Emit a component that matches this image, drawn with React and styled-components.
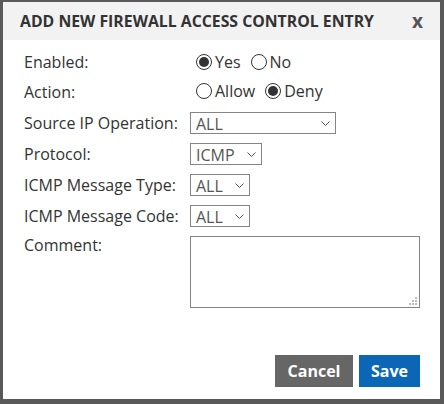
import React, { useState } from "react";
import styled, { createGlobalStyle } from "styled-components";

const GlobalStyle = createGlobalStyle`
  html, body {
    margin: 0;
    padding: 0;
    background: #595959;
    font-family: "Open Sans", "Noto Sans", sans-serif;
  }
`;

const Backdrop = styled.div`
  width: 444px;
  height: 404px;
  padding: 2px 4px 5px 3px;
  box-sizing: border-box;
`;

const Dialog = styled.div`
  background: #fff;
  height: 100%;
  display: flex;
  flex-direction: column;
`;

const Header = styled.div`
  height: 38px;
  background: #f2f2f2;
  display: flex;
  align-items: center;
  justify-content: space-between;
  padding: 0 17px 0 17px;
`;

const Title = styled.h2`
  margin: 0;
  font-size: 15.8px;
  font-weight: 700;
  color: #333;
`;

const Close = styled.button`
  border: 0;
  background: none;
  padding: 0;
  font-family: inherit;
  font-size: 19px;
  font-weight: 700;
  line-height: 1;
  color: #555;
  cursor: pointer;
`;

const Body = styled.div`
  flex: 1;
  display: grid;
  grid-template-columns: 166px 1fr;
  grid-auto-rows: min-content;
  row-gap: 9px;
  align-items: center;
  padding: 12px 21px 0 21px;
`;

const Label = styled.label`
  font-size: 16px;
  line-height: 20px;
  color: #333;
  align-self: ${(p) => (p.$top ? "start" : "center")};
  margin-top: ${(p) => (p.$top ? "-1px" : "0")};
`;

const RadioGroup = styled.div`
  display: flex;
  align-items: center;
  height: 20px;
  gap: 10px;
  padding-left: 6px;
  margin-bottom: ${(p) => (p.$last ? 2 : 0)}px;
`;

const RadioLabel = styled.label`
  display: flex;
  align-items: center;
  gap: 3px;
  font-size: 16px;
  color: #333;
  cursor: pointer;
`;

const RadioInput = styled.input`
  appearance: none;
  margin: 0;
  width: 16px;
  height: 16px;
  border: 1px solid #333;
  border-radius: 50%;
  background: #fff;
  box-sizing: border-box;
  display: grid;
  place-items: center;
  &:checked::after {
    content: "";
    width: 10px;
    height: 10px;
    border-radius: 50%;
    background: #333;
  }
`;

const SelectWrap = styled.div`
  position: relative;
  width: ${(p) => p.$w}px;
  height: 22px;
`;

const Select = styled.select`
  appearance: none;
  width: 100%;
  height: 100%;
  margin: 0;
  border: 1px solid #858585;
  border-radius: 0;
  background: #fff;
  padding: 0 0 0 5px;
  font-family: inherit;
  font-size: 16px;
  color: #555;
  outline: none;
`;

const Chevron = styled.svg`
  position: absolute;
  right: 6px;
  top: 9px;
  pointer-events: none;
`;

const TextWrap = styled.div`
  position: relative;
  width: 230px;
  height: 72px;
`;

const TextArea = styled.textarea`
  width: 100%;
  height: 100%;
  box-sizing: border-box;
  border: 1px solid #858585;
  resize: none;
  margin: 0;
  font-family: inherit;
  font-size: 14px;
  outline: none;
`;

const Grip = styled.svg`
  position: absolute;
  right: 3px;
  bottom: 3px;
  pointer-events: none;
`;

const Footer = styled.div`
  display: flex;
  justify-content: flex-end;
  gap: 6px;
  padding: 0 20px 12px 0;
`;

const Button = styled.button`
  height: 32px;
  width: ${(p) => (p.$primary ? 61 : 78)}px;
  border: 0;
  border-radius: 0;
  padding: 0;
  background: ${(p) => (p.$primary ? "#0b67b6" : "#666")};
  color: #fff;
  font-family: inherit;
  font-size: 16px;
  font-weight: 700;
  cursor: pointer;
`;

function Dropdown({ width, value, options }) {
  return (
    <SelectWrap $w={width}>
      <Select defaultValue={value}>
        {options.map((o) => (
          <option key={o}>{o}</option>
        ))}
      </Select>
      <Chevron width="9" height="5" viewBox="0 0 9 5">
        <path d="M0.5 0.5 L4.5 4.5 L8.5 0.5" fill="none" stroke="#555" strokeWidth="1" />
      </Chevron>
    </SelectWrap>
  );
}

function Radio({ name, label, checked, onChange }) {
  return (
    <RadioLabel>
      <RadioInput type="radio" name={name} checked={checked} onChange={onChange} />
      {label}
    </RadioLabel>
  );
}

export default function App() {
  const [enabled, setEnabled] = useState("yes");
  const [action, setAction] = useState("deny");

  const dots = [
    [6, 0],
    [3, 3], [6, 3],
    [0, 6], [3, 6], [6, 6],
  ];

  return (
    <>
      <GlobalStyle />
      <Backdrop>
        <Dialog>
          <Header>
            <Title>ADD NEW FIREWALL ACCESS CONTROL ENTRY</Title>
            <Close>x</Close>
          </Header>
          <Body>
            <Label>Enabled:</Label>
            <RadioGroup>
              <Radio name="en" label="Yes" checked={enabled === "yes"} onChange={() => setEnabled("yes")} />
              <Radio name="en" label="No" checked={enabled === "no"} onChange={() => setEnabled("no")} />
            </RadioGroup>

            <Label>Action:</Label>
            <RadioGroup $last>
              <Radio name="ac" label="Allow" checked={action === "allow"} onChange={() => setAction("allow")} />
              <Radio name="ac" label="Deny" checked={action === "deny"} onChange={() => setAction("deny")} />
            </RadioGroup>

            <Label>Source IP Operation:</Label>
            <Dropdown width={146} value="ALL" options={["ALL", "Equal", "Not Equal"]} />

            <Label>Protocol:</Label>
            <Dropdown width={72} value="ICMP" options={["ALL", "TCP", "UDP", "ICMP"]} />

            <Label>ICMP Message Type:</Label>
            <Dropdown width={60} value="ALL" options={["ALL"]} />

            <Label>ICMP Message Code:</Label>
            <Dropdown width={60} value="ALL" options={["ALL"]} />

            <Label $top>Comment:</Label>
            <TextWrap>
              <TextArea />
              <Grip width="8" height="8" viewBox="0 0 8 8">
                {dots.map(([x, y]) => (
                  <rect key={`${x}-${y}`} x={x} y={y} width="2" height="2" fill="#bbb" />
                ))}
              </Grip>
            </TextWrap>
          </Body>
          <Footer>
            <Button>Cancel</Button>
            <Button $primary>Save</Button>
          </Footer>
        </Dialog>
      </Backdrop>
    </>
  );
}
